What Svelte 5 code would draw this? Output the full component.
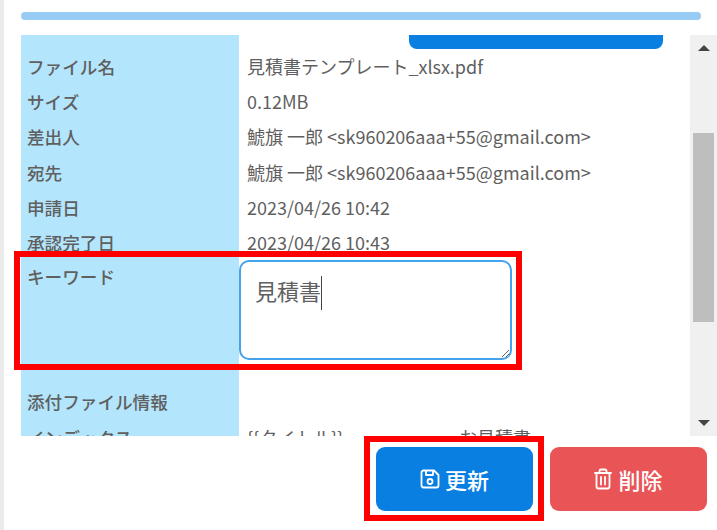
<script>
  const rows = [
    ['ファイル名', '見積書テンプレート_xlsx.pdf'],
    ['サイズ', '0.12MB'],
    ['差出人', '鯱旗 一郎 <sk960206aaa+55@gmail.com>'],
    ['宛先', '鯱旗 一郎 <sk960206aaa+55@gmail.com>'],
    ['申請日', '2023/04/26 10:42'],
    ['承認完了日', '2023/04/26 10:43']
  ];
  let keyword = $state('見積書');
</script>

<div class="page">
  <div class="progress"></div>
  <div class="panel">
    <div class="scroll">
      <div class="tab"></div>
      <div class="rows">
        {#each rows as [k, v]}
          <div class="row"><div class="key">{k}</div><div class="val">{v}</div></div>
        {/each}
        <div class="row kw">
          <div class="key">キーワード</div>
          <div class="val area">
            <textarea bind:value={keyword}></textarea>
            <span class="caret"></span>
          </div>
        </div>
        <div class="row attach"><div class="key">添付ファイル情報</div><div class="val"></div></div>
        <div class="row last">
          <div class="key">インデックス</div>
          <div class="val split"><span class="tpl">{'{{タイトル}}'}</span><span>お見積書</span></div>
        </div>
      </div>
    </div>
    <div class="bar">
      <span class="arrow up"></span>
      <div class="track"><div class="thumb"></div></div>
      <span class="arrow down"></span>
    </div>
  </div>
  <div class="actions">
    <button class="btn save">
      <svg viewBox="0 0 20 20" width="20" height="20" fill="none" stroke="currentColor" stroke-width="1.8" stroke-linejoin="round">
        <path d="M3.500 1.500h10.500l4.500 4.500v10.500a2 2 0 0 1-2 2H3.500a2 2 0 0 1-2-2V3.500a2 2 0 0 1 2-2z"/>
        <path d="M6 1.500v4.500h7V1.500"/>
        <circle cx="10" cy="12.500" r="2.500"/>
      </svg>
      <span>更新</span>
    </button>
    <button class="btn del">
      <svg class="trash" viewBox="0 0 18 22" width="18" height="22" fill="none" stroke="currentColor" stroke-width="1.8" stroke-linejoin="round" stroke-linecap="round">
        <path d="M1 5h16"/>
        <path d="M5.500 5V3a1.500 1.500 0 0 1 1.500-1.500h4A1.500 1.500 0 0 1 12.500 3v2"/>
        <path d="M2.500 5v13.500a2 2 0 0 0 2 2h9a2 2 0 0 0 2-2V5"/>
        <path d="M7 9v7.500M11 9v7.500"/>
      </svg>
      <span>削除</span>
    </button>
  </div>
  <div class="mark mark1"></div>
  <div class="mark mark2"></div>
</div>

<style>
  :global(body) { margin: 0; background: #fff; }
  .page {
    position: relative;
    width: 717px;
    height: 530px;
    box-sizing: border-box;
    overflow: hidden;
    padding: 12px 0 0 17px;
    font-family: "Noto Sans CJK JP", "Noto Sans", sans-serif;
    font-size: 18px;
    color: #5f5f5f;
    background: #fff;
    border-left: 4px solid #ebebeb;
  }
  .progress { width: 680px; height: 8px; border-radius: 4px; background: #97cbf3; }
  .panel { display: flex; height: 401px; margin-top: 15px; }
  .scroll { position: relative; width: 669px; overflow: hidden; }
  .tab {
    position: absolute; left: 388px; top: 0; width: 254px; height: 14px;
    background: #0a7fe2; border-radius: 0 0 8px 8px;
  }
  .rows {
    display: flex; flex-direction: column; min-height: 100%; padding-top: 14px; box-sizing: border-box;
    background: linear-gradient(to right, #b3e5fc 218px, #fff 218px);
  }
  .row { display: flex; height: 35.2px; line-height: 35.2px; }
  .key { width: 218px; padding-left: 6px; box-sizing: border-box; flex: none; font-size: 17.600px; font-weight: 500; }
  .val { padding-left: 8px; flex: 1; white-space: nowrap; }
  .kw { height: 112px; margin-top: -1px; }
  .kw .key { line-height: 35px; }
  .area { padding: 1px 0 0; position: relative; }
  textarea {
    display: block; width: 273px; height: 100px; box-sizing: border-box;
    border: 2px solid #45a3ec; border-radius: 10px; outline: none;
    padding: 12px 14px 4px; font: inherit; font-size: 22px; line-height: 32px; color: #5f5f5f; background: #fff;
  }
  .caret { position: absolute; left: 82px; top: 17px; width: 1px; height: 34px; background: #444; }
  .attach { margin-top: 13px; }
  .last { margin-top: 1px; }
  .tpl { display: inline-block; width: 212px; }
  .bar {
    width: 27px; background: #f0f0f0; position: relative;
    display: flex; flex-direction: column; align-items: center;
  }
  .track { flex: 1; width: 100%; position: relative; }
  .thumb { position: absolute; left: 3px; top: 98px; width: 21px; height: 189px; background: #bebebe; }
  .arrow { position: absolute; left: 8px; width: 0; height: 0; border-left: 6px solid transparent; border-right: 6px solid transparent; }
  .up { top: 10px; border-bottom: 6px solid #444; }
  .down { bottom: 10px; border-top: 6px solid #444; }
  .actions { display: flex; gap: 17px; margin: 11px 0 0 355px; }
  .btn {
    width: 157px; height: 64px; border: 0; border-radius: 9px; color: #fff;
    display: flex; align-items: center; justify-content: center; gap: 5px;
    font: 500 22px "Noto Sans CJK JP", sans-serif;
  }
  .save { background: #0a7fe2; }
  .del { background: #e95557; gap: 6px; }
  .mark { position: absolute; border: 6px solid #f00; box-sizing: border-box; pointer-events: none; }
  .mark1 { left: 10px; top: 251px; width: 508px; height: 119px; }
  .mark2 { left: 360px; top: 436px; width: 180px; height: 85px; }
</style>
